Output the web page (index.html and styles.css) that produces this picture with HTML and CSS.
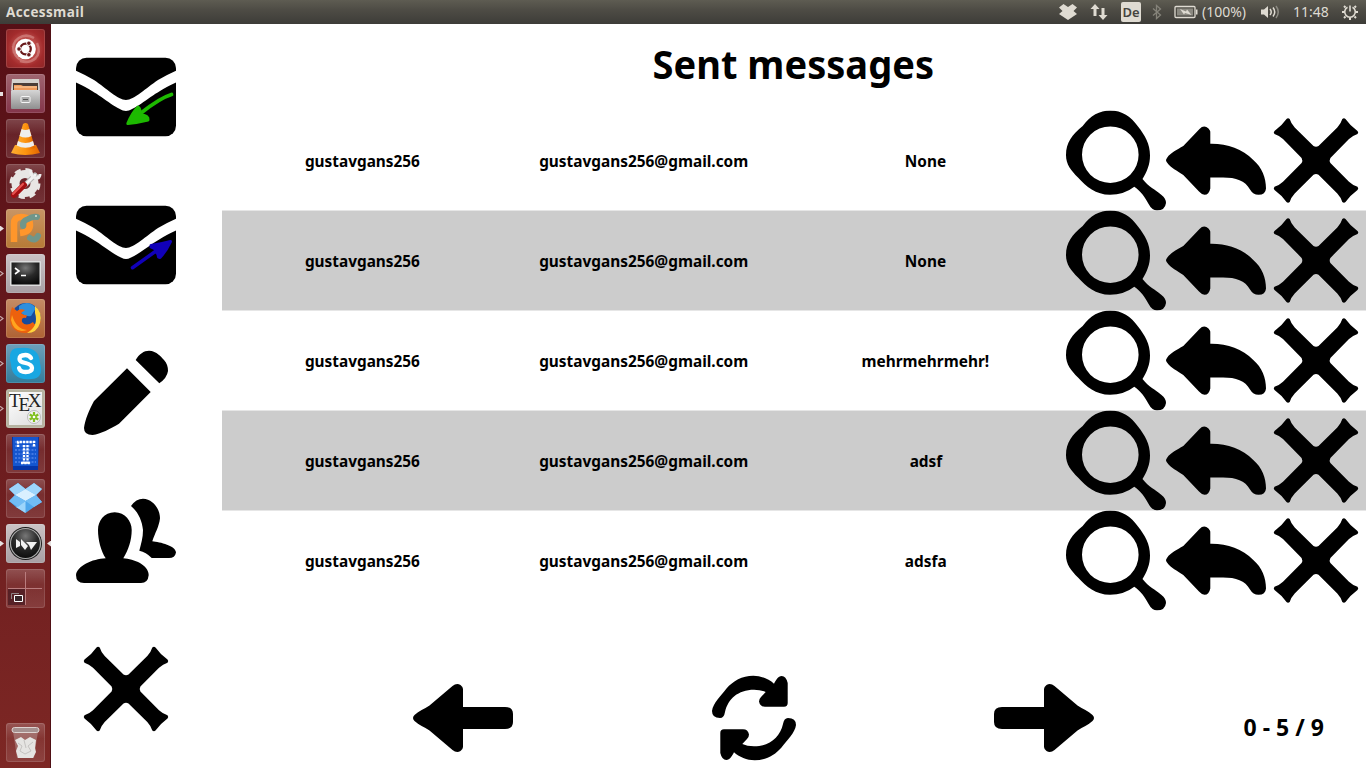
FILE: index.html
```
<!DOCTYPE html>
<html lang="en">
<head>
<meta charset="utf-8">
<title>Accessmail</title>
<link rel="stylesheet" href="styles.css">
<script src="app.js" defer></script>
</head>
<body>
<svg class="defs" aria-hidden="true">
  <defs>
    <linearGradient id="grey" x1="0" y1="0" x2="0" y2="1"><stop offset="0" stop-color="#d6d6d6"/><stop offset="1" stop-color="#8f8f8f"/></linearGradient>
    <linearGradient id="cone" x1="0" y1="0" x2="1" y2="0"><stop offset="0" stop-color="#ffae32"/><stop offset=".5" stop-color="#fc9410"/><stop offset="1" stop-color="#e26500"/></linearGradient>
    <radialGradient id="dark" cx=".5" cy=".25" r=".8"><stop offset="0" stop-color="#777"/><stop offset=".5" stop-color="#292929"/><stop offset="1" stop-color="#080808"/></radialGradient>
    <symbol id="envelope" viewBox="0 0 100 100">
      <rect y="10.7" width="100" height="78.6" rx="10.5"/>
      <path fill="#fff" d="M-1 23.2Q10 28 18 33C30 41 42 53 50 53S70 41 82 33Q90 28 101 23.2V35Q90 40 84 44C72 51 57 64 50 64S28 51 16 44Q10 40-1 35Z"/>
    </symbol>
    <symbol id="cross" viewBox="0 0 100 100">
      <path d="M20.500 8.500Q22 7 23.700 8.500Q25 13 28.700 17L47.500 35.600Q50 37 52.500 35.600L71.300 17Q75 13 76.300 8.500Q78 7 79.500 8.500Q84 15 91.500 20.500Q93 22 91.500 23.700Q87 25 83 28.700L64.400 47.500Q63 50 64.400 52.500L83 71.300Q87 75 91.500 76.300Q93 78 91.500 79.500Q84 85 79.500 91.500Q78 93 76.300 91.500Q75 87 71.300 83L52.500 64.400Q50 63 47.500 64.400L28.700 83Q25 87 23.700 91.500Q22 93 20.500 91.500Q16 85 8.500 79.500Q7 78 8.500 76.300Q13 75 17 71.300L35.600 52.500Q37 50 35.600 47.500L17 28.700Q13 25 8.500 23.700Q7 22 8.500 20.500Q16 15 20.500 8.500Z"/>
    </symbol>
    <symbol id="search" viewBox="0 0 100 100">
      <path fill-rule="evenodd" d="M44 0C56 0 65 6 72 16C79 25 84 33 84 45C84 54 81 61 76.500 68.700C83 77 89 79 95.500 84.500Q100 88 100 92.500Q99 100 91 100Q86 100 82.300 93C79 87 75 81 68.300 76.300Q58 84.300 44 84.300C30 84.300 20 76 12 67C5 60 0 54 0 44.500C0 33 6 24 16.700 15.700C24 5 34 0 44 0ZM44.300 16A28.300 28.300 0 1 0 44.300 72.600A28.300 28.300 0 1 0 44.300 16Z"/>
    </symbol>
    <symbol id="reply" viewBox="0 0 100 100">
      <path d="M1 47.500C5 42 11 39.500 17.300 35.700L33.500 18.500Q38 14 42.500 18Q44.300 20 44.300 22V33.300C61 33 76 38 87.300 49.500C96 57 100 67 100 78Q99.500 84.300 92.500 84.300Q87 84.300 84 79C79 70 70 67 57 67H44.300V78Q43 84.300 38.500 84.300Q36 84.300 33 81L17.300 64.500C11 60 5 57.500 1 52Q-1 50 1 47.500Z"/>
    </symbol>
    <symbol id="arrow" viewBox="0 0 100 100">
      <path d="M1.500 47C6 43 11 41 16.500 37.500L39.500 18Q43.500 14.800 47.500 17Q50 19 50 21V39H92Q100 39 100 46V54Q100 61 92 61H50V79Q50 81 47.500 83Q43.500 85.200 39.500 82L16.500 62.500C11 59 6 57 1.500 53Q-1.500 50 1.500 47Z"/>
    </symbol>
    <path id="half-turn" d="M8 43C9 35 17 28 22.500 20.500C29 13 38 7.700 49.300 7.700C57 7.700 65 11 70 15.700C72 12 74 8 77.700 8Q82 8 83.700 15V35Q83.700 38.700 80 38.700H61Q56 38.700 55 33.500Q55 31 57 29L61.700 24Q57 21.700 50 21.700C34 21.700 24 31 21 44Q20 50 16 50Q8 50 8 43Z"/>
    <symbol id="refresh" viewBox="0 0 100 100"><use href="#half-turn"/><use href="#half-turn" transform="rotate(180 50 50)"/></symbol>
  </defs>
</svg>

<header class="panel">
  <div class="panel-title">Accessmail</div>
  <div class="indicators">
    <svg class="ind-dropbox" width="20" height="18" viewBox="0 0 20 18"><path fill="#dfdbd2" d="M5.500 1L10 4L14.500 1L19 4.500L15.500 8L19 11L14.500 14L10 17L5.500 14L1 11L4.500 8L1 4.500Z"/></svg>
    <svg class="ind-net" width="18" height="16" viewBox="0 0 18 16"><path fill="#dfdbd2" d="M5 0L9.500 5H6.500V12H3.500V5H.5ZM11.500 4H14.500V11H17.500L13 16L8.500 11H11.500Z"/></svg>
    <span class="ind-lang">De</span>
    <svg class="ind-bt" width="10" height="16" viewBox="0 0 10 16"><path fill="none" stroke="#85837a" stroke-width="1.300" d="M1 4.500L8.500 11L4.500 14.500V1.500L8.500 5L1 11.500"/></svg>
    <svg class="ind-bat" width="24" height="14" viewBox="0 0 24 14"><rect x="1" y="1.500" width="20" height="11" rx="1" fill="none" stroke="#dfdbd2" stroke-width="1.300"/><path fill="#8b8981" d="M3 3.500H19V10.500H3Z"/><path fill="#dfdbd2" d="M22 4.500h1.500v5H22ZM6 4L12 6.500L13 4.500L17.500 10L11 8L10 9.500Z"/></svg>
    <span class="ind-charge">(100%)</span>
    <svg class="ind-vol" width="20" height="16" viewBox="0 0 20 16"><path fill="#dfdbd2" d="M1 5.500H4L8 2V14L4 10.500H1Z"/><path fill="none" stroke="#dfdbd2" stroke-width="1.500" d="M10 5Q12.500 8 10 11M13 3.500Q16.500 8 13 12.500"/><path fill="none" stroke="#8b8981" stroke-width="1.500" d="M16 2Q20.500 8 16 14"/></svg>
    <span class="ind-time">11:48</span>
    <svg class="ind-power" width="18" height="18" viewBox="0 0 18 18"><g fill="none" stroke="#dfdbd2"><path stroke-width="1.600" d="M6.500 4.300A5.300 5.300 0 1 0 11.500 4.300M9 2.500V8.500"/><path stroke-width="2" d="M4.500 4.500L3 3M13.500 4.500L15 3M3.500 9H1M14.500 9H17M4.500 13.500L3 15M13.500 13.500L15 15M9 14.500V17"/></g></svg>
  </div>
</header>

<div class="desktop">
  <nav class="launcher">
    <div class="tile ubuntu"><svg viewBox="0 0 39 39"><path fill="none" stroke="#e2a3a0" stroke-width="2.500" opacity=".5" d="M8 24C4 10 18 3 28 9M31 14C37 27 26 36 14 32M7 17C8 33 22 36 30 29"/><circle cx="19.500" cy="20" r="10.300" fill="#fff"/><circle cx="19.500" cy="20" r="5.300" fill="none" stroke="#69191b" stroke-width="2.200"/><g fill="#69191b" stroke="#fff"><circle cx="13" cy="20" r="2.300"/><circle cx="22.900" cy="14.200" r="2.300"/><circle cx="22.900" cy="25.800" r="2.300"/></g></svg></div>
    <div class="tile files"><i class="mark filled"></i><svg viewBox="0 0 39 39"><path fill="#d5d2ce" d="M6 5H33L34 16H5Z"/><path fill="#4c3d37" d="M7 9H32V17H7Z"/><path fill="#ee9a5c" d="M8 11H15L17 12H31V17H8Z"/><path stroke="#ffd0a0" d="M8 13H31"/><rect x="5" y="16" width="29" height="19" rx="1" fill="url(#grey)"/><rect x="15" y="22.500" width="9" height="6" rx="1" fill="#aaa" stroke="#f5f5f5"/><path stroke="#555" d="M17 25.500H22"/></svg></div>
    <div class="tile vlc"><svg viewBox="0 0 39 39"><path fill="url(#cone)" d="M9 26H30L34 34Q19 38 5 34Z"/><path fill="url(#cone)" d="M17 5Q19.500 3 22 5L29 29Q19.500 33 10 29Z"/><path fill="#eee" d="M15.600 10Q19.500 12 23.400 10L25.500 17Q19.500 20 13.500 17ZM12 22Q19.500 26 27 22L28.300 26.500Q19.500 31 10.700 26.500Z"/></svg></div>
    <div class="tile settings"><svg viewBox="0 0 39 39"><circle cx="19" cy="19.500" r="9.500" fill="none" stroke="#e8e6e4" stroke-width="8"/><circle cx="19" cy="19.500" r="13.500" fill="none" stroke="#e8e6e4" stroke-width="4" stroke-dasharray="6 4.600"/><path stroke="#b4b4b4" stroke-width="5" stroke-linecap="round" d="M19 21L29 11"/><path stroke="#f3f3f3" stroke-width="3" stroke-linecap="round" d="M18 22L29 11"/><path fill="none" stroke="#efefef" stroke-width="3" d="M25 6Q24 13 30 14Q34 14 34 10"/><path stroke="#a40f12" stroke-width="6" stroke-linecap="round" d="M8 31L18 21"/><path stroke="#e65350" stroke-width="2" stroke-linecap="round" d="M7 30L17 20"/></svg></div>
    <div class="tile charm"><i class="mark filled"></i><svg viewBox="0 0 39 39"><path fill="none" stroke="#ff962b" stroke-width="6.500" d="M8 33V15Q8 8 15 8Q24 8 24 16Q24 23 14 24"/><path fill="none" stroke="#70968a" stroke-width="6" stroke-linecap="round" d="M17 17Q16 12 22 10Q27 7 31 8M24 29Q29 33 32 27"/><circle cx="30" cy="7" r="1" fill="#d7e0dc"/></svg></div>
    <div class="tile term"><i class="mark"></i><svg viewBox="0 0 39 39"><rect x="4" y="7" width="31" height="25" rx="1" fill="#ddd"/><rect x="5.500" y="8.500" width="28" height="22" fill="url(#dark)"/><path fill="none" stroke="#fff" stroke-width="1.600" d="M9 14L13 17L9 20M15 21.500H20"/></svg></div>
    <div class="tile fox"><i class="mark"></i><svg viewBox="0 0 39 39"><circle cx="20" cy="18.500" r="14.500" fill="#174b9e"/><path fill="#2c8fdd" d="M13 7Q22 0 30 9L25 17Q18 18 13 12Z"/><path fill="#ed610d" d="M6 8L11 12Q14 9 19 11L15 14Q19 17 21 16L20 19Q15 18 16 23Q20 28 27 23Q29 28 35 22Q31 34 20 34Q5 34 4 20Q4 13 6 8Z"/><path fill="#ffd43c" d="M29 7Q37 13 34 24Q31 34 21 34Q33 27 29 14Z"/><path fill="#ffa51f" d="M6 16Q10 30 21 31Q8 35 5 21Z"/></svg></div>
    <div class="tile skype"><i class="mark"></i><svg viewBox="0 0 39 39"><path fill="#18a7e2" d="M4 11Q5 3 14 4Q33 2 34 19Q38 35 25 35Q6 37 5 20Q3 15 4 11Z"/><path fill="none" stroke="#fff" stroke-width="4.300" stroke-linecap="round" d="M25 14Q23 11 19.500 11Q13.500 11 13.500 15Q13.500 18 19.500 19Q26 20.500 26 24Q26 28 19.500 28Q14 28 13 24"/></svg></div>
    <div class="tile tex"><i class="mark"></i><span class="tex-logo">T<b>E</b>X</span><svg viewBox="0 0 39 39"><circle cx="28" cy="28" r="6.500" fill="#f1f1f1" stroke="#bbb"/><path stroke="#80bf20" stroke-width="2.200" d="M28 23V33M23.700 25.500L32.300 30.500M32.300 25.500L23.700 30.500"/><circle cx="28" cy="28" r="2.600" fill="#80bf20"/><circle cx="28" cy="28" r="1.300" fill="#fff"/></svg></div>
    <div class="tile tux"><svg viewBox="0 0 39 39"><path fill="#0636a8" d="M6 3H33L32 36H7Z"/><path fill="#1456cf" d="M7 3H32V32H7Z"/><path fill="none" stroke="#5084ea" stroke-width="1.500" stroke-dasharray="2 1.300" d="M9 8H30M9 12H30M9 16H30M9 20H30M9 24H30M9 28H30"/><path fill="none" stroke="#fff" stroke-width="2.300" stroke-dasharray="2.300 1" d="M12 13V8H28V13M18 11V30M21.500 11V30M15 29H25"/></svg></div>
    <div class="tile box"><svg viewBox="0 0 39 39"><path fill="#4da6ec" d="M3 10L12 4L19.500 10L28 4L36 10L30 16L36 23L28 28L19.500 34L10 28L3 22L9 16Z"/><path fill="#9dd5fb" d="M3 10L12 4L19.500 10L9 16ZM36 10L28 4L19.500 10L30 16ZM10 28L19.500 22V34Z"/><path fill="#d9f0ff" d="M9 16L19.500 10L30 16L19.500 22Z"/><path fill="#71bcf4" d="M3 22L9 16L19.500 22L12 28ZM36 23L30 16L19.500 22L28 28Z"/></svg></div>
    <div class="tile kivy"><i class="mark filled"></i><i class="mark right"></i><svg viewBox="0 0 39 39"><circle cx="19.500" cy="19.500" r="16.500" fill="#181818"/><circle cx="19.500" cy="19.500" r="15" fill="url(#dark)" stroke="#aaa" stroke-width="1.200"/><path fill="#f1f1f1" d="M10 15L14 18V22L10 24ZM15 15L22 22L19 26L15 21ZM20 18H31L25 26L23 21Z"/></svg></div>
    <div class="tile spaces"><svg viewBox="0 0 39 39"><path fill="#451820" opacity=".7" d="M2 20H19V36H2Z"/><path stroke="#b97c7e" d="M19.500 3V36M2 19.500H36"/><path fill="none" stroke="#8e8284" d="M5.500 30V24.500H13"/><path fill="#38262a" stroke="#fff" d="M8.500 26.500H16.500V32.500H8.500Z"/></svg></div>
    <div class="tile trash"><svg viewBox="0 0 39 39"><path fill="#c2a7a5" opacity=".45" d="M7 8H32L28 35H11Z"/><path fill="#e5e4e2" d="M9 17L15 14L19 17L24 14L30 17L29 25L30 29L27 35H12L10 28L12 23Z"/><path fill="none" stroke="#c4c2c0" d="M12 20L16 23L14 28L19 31L25 28L22 23L27 19M18 17L20 25"/><rect x="6" y="4.500" width="27" height="5" rx="2.500" fill="#a69291" stroke="#ddd3d1"/></svg></div>
  </nav>

  <main class="app">
    <aside class="actions">
      <svg class="icon" viewBox="0 0 100 100"><use href="#envelope"/><path fill="none" stroke="#1db900" stroke-width="3.800" stroke-linecap="round" d="M95.500 47.500Q84 51 65 66"/><path fill="#1db900" stroke="#1db900" stroke-width="3" stroke-linejoin="round" d="M62 60Q56 66 51.800 76.500Q62 75.500 72 73L71.800 71Q70 68 65 68L64 65Q64 61 62 60Z"/></svg>
      <svg class="icon" viewBox="0 0 100 100"><use href="#envelope"/><path fill="none" stroke="#1100b9" stroke-width="3.500" stroke-linecap="round" d="M56.500 72.700L80 56"/><path fill="#1100b9" stroke="#1100b9" stroke-width="3" stroke-linejoin="round" d="M75 50.500Q86 49 94.500 46.500Q90 56 84 62.500L82.500 62Q82 58 80 57L79.500 54Q77 53 75 52Z"/></svg>
      <svg class="icon" viewBox="0 0 100 100"><path d="M51 25.300L74.700 49L43 80.800C34 86 25 91 16.500 92Q8 92 8 85C9 77 13 67 18 58ZM59.700 17C63 11 68 7.700 73 7.700C81 8 85 14 88 17C91 20 92 24 92 28Q91 35 83.300 40.300Z"/></svg>
      <svg class="icon" viewBox="0 0 100 100"><path d="M38.700 21.300C49 21.300 55.700 30 55.700 39C55.700 49 52.500 59 47.300 67.300C58 68 72.700 74 72.700 84Q72 92 65 92H8Q0 92 0 84C1 75 16 68 29.700 67.300C25 60 22 49 22 39C22 30 28 21.300 38.700 21.300ZM55 15Q60 7.700 67 7.700C77 8 84 18 84 27.300C83 36 79 42 76.300 50.300C84 51 100 55 100 61.500Q99 67 93 67H75.700Q70 61 63.300 59.700C65 53 67 47 67 39C66 29 62 21 55 15Z"/></svg>
      <svg class="icon"><use href="#cross"/></svg>
    </aside>
    <section class="mailbox">
      <h1><span>Sent messages</span></h1>
      <div class="messages" id="messages"></div>
      <footer>
        <div><svg class="icon"><use href="#arrow"/></svg></div>
        <div><svg class="icon"><use href="#refresh"/></svg></div>
        <div><svg class="icon flip"><use href="#arrow"/></svg></div>
        <div class="count"><span>0 - 5 / 9</span></div>
      </footer>
    </section>
  </main>
</div>
</body>
</html>
```

FILE: app.js
```
const subjects = ["None", "None", "mehrmehrmehr!", "adsf", "adsfa"];
document.getElementById("messages").innerHTML = subjects.map(subject => `
  <div class="message">
    <div class="cell"><span>gustavgans256</span></div>
    <div class="cell"><span>gustavgans256@gmail.com</span></div>
    <div class="cell"><span>${subject}</span></div>
    <svg class="icon"><use href="#search"/></svg>
    <svg class="icon"><use href="#reply"/></svg>
    <svg class="icon"><use href="#cross"/></svg>
  </div>`).join("");
```

FILE: styles.css
```
* { box-sizing: border-box; }
body { margin: 0; width: 1366px; height: 768px; overflow: hidden; background: #fff; color: #000; font-family: "Noto Sans", "Open Sans", sans-serif; }
svg { display: block; flex: none; }
.defs { position: absolute; width: 0; height: 0; }

.panel { height: 24px; display: flex; justify-content: space-between; align-items: center; padding: 0 7px 0 6px; background: linear-gradient(#5e5c52, #4e4c45 40%, #3d3c38); color: #dfdbd2; font-size: 14px; line-height: 24px; }
.panel-title { font-family: "Open Sans", sans-serif; font-weight: 700; font-size: 13.5px; letter-spacing: 0.4px; }
.indicators { display: flex; align-items: center; height: 24px; }
.ind-net { margin-left: 12px; }
.ind-lang { margin-left: 13px; width: 20px; height: 20px; border-radius: 2px; background: #dfdbd2; color: #45443f; text-align: center; line-height: 20px; font-weight: 600; font-size: 13px; }
.ind-bt { margin-left: 11px; }
.ind-bat { margin-left: 12px; }
.ind-charge { margin-left: 4px; width: 46px; }
.ind-vol { margin-left: 12px; }
.ind-time { margin-left: 13px; width: 37px; }
.ind-power { margin-left: 11px; }

.desktop { display: flex; height: 744px; }
.launcher { width: 51px; flex: none; display: flex; flex-direction: column; gap: 6px; padding: 5px 0 6px 6px; background: linear-gradient(#560f16, #691b1e 50%, #7d2724); border-right: 1px solid #4f1015; }
.tile { position: relative; width: 39px; height: 39px; flex: none; border-radius: 3px; background: linear-gradient(#ffffff38, #ffffff12 40%, #ffffff20); box-shadow: inset 0 0 0 1px #ffffff20; }
.tile svg { width: 39px; height: 39px; }
.ubuntu { background: radial-gradient(circle, #e07d75, #a32b2c 65%, #8d2526); }
.files { background: linear-gradient(#a06570, #84354a); }
.charm { background: linear-gradient(#c89565, #b77a36); }
.term, .kivy { background: linear-gradient(#cbc3c5, #a8a0a4); }
.fox { background: linear-gradient(#c58c65, #af6334); }
.skype { background: linear-gradient(#6ea0ba, #337c9a); }
.tex { background: linear-gradient(145deg, #fff, #ddd) center / 33px 33px no-repeat, #b6b3a1; }
.tex svg { position: absolute; inset: 0; }
.tex-logo { position: absolute; left: 3px; top: 2px; font: 19px/20px "Liberation Serif", serif; letter-spacing: -2.2px; color: #222; }
.tex-logo b { position: relative; top: 4px; font-weight: 400; }
.trash { margin-top: auto; }
.mark { position: absolute; left: -6px; top: 16.5px; width: 4px; height: 6px; background: #c4a6a8; clip-path: polygon(0 0, 100% 50%, 0 100%, 0 75%, 50% 50%, 0 25%); }
.mark.filled { background: #e6e0e0; clip-path: polygon(0 0, 100% 50%, 0 100%); }
.files .mark { top: 18px; width: 3px; height: 4px; clip-path: none; }
.mark.right { left: 41px; background: #e6e0e0; clip-path: polygon(100% 0, 0 50%, 100% 100%); }

.app { flex: 1; display: flex; }
.icon { width: 100px; height: 100px; }
.actions { width: 171px; flex: none; padding: 23px 0 0 25px; display: flex; flex-direction: column; gap: 48px; }
.mailbox { flex: 1; display: flex; flex-direction: column; }
h1 { margin: 0; height: 86px; text-align: center; font-size: 39px; line-height: 80px; font-weight: 700; }
h1 span, .cell span, .count span { display: inline-block; }
h1 span { transform: translateX(-1px) scaleX(.976); }
.message { height: 100px; display: grid; grid-template-columns: 281px 282px 281px repeat(3, 100px); }
.message .icon { transform: translateY(.4px); }
.message:nth-child(even) { background: linear-gradient(#e6e6e6 1px, #ccc 1px); box-shadow: 0 1px #e6e6e6; }
.cell { text-align: center; font-size: 16px; line-height: 102px; font-weight: 700; }
.cell span { transform: scaleX(.962); }
.cell:first-child span { transform: translateX(-.5px) scaleX(.96); }
footer { flex: 1; display: grid; grid-template-columns: 290.5px 290.5px 290.5px 1fr; padding-left: 96px; align-items: end; justify-items: center; }
.flip { transform: scaleX(-1); }
.count { padding-left: 12px; font-size: 23px; font-weight: 700; line-height: 82px; }
```
